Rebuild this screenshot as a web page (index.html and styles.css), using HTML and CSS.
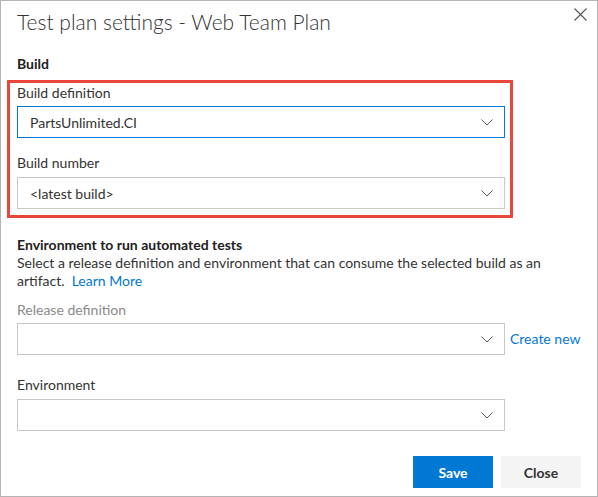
FILE: index.html
```html
<!DOCTYPE html>
<html>
<head>
<meta charset="utf-8">
<link rel="stylesheet" href="styles.css">
</head>
<body>
<div class="dialog">
  <div class="title-row">
    <h1 class="title">Test plan settings - Web Team Plan</h1>
    <button class="close-x" aria-label="Close">
      <svg width="13" height="13" viewBox="0 0 13 13"><path d="M0.5 0.5 L12.5 12.5 M12.5 0.5 L0.5 12.5" stroke="#555" stroke-width="1.1" fill="none"/></svg>
    </button>
  </div>

  <div class="section-title build-title">Build</div>

  <div class="highlight">
    <div class="label first">Build definition</div>
    <div class="select focused">
      <span class="value">PartsUnlimited.CI</span>
      <svg class="chev" width="12" height="7" viewBox="0 0 12 7"><polyline points="0.5,0.5 6,6 11.5,0.5" fill="none" stroke="#5a5a5a" stroke-width="1"/></svg>
    </div>
    <div class="label">Build number</div>
    <div class="select">
      <span class="value">&lt;latest build&gt;</span>
      <svg class="chev" width="12" height="7" viewBox="0 0 12 7"><polyline points="0.5,0.5 6,6 11.5,0.5" fill="none" stroke="#5a5a5a" stroke-width="1"/></svg>
    </div>
  </div>

  <div class="env">
    <div class="section-title">Environment to run automated tests</div>
    <p class="desc">Select a release definition and environment that can consume the selected build as an<br>artifact.&nbsp; <a class="link" href="#">Learn More</a></p>
  </div>

  <div class="label muted">Release definition</div>
  <div class="row">
    <div class="select">
      <span class="value"></span>
      <svg class="chev" width="12" height="7" viewBox="0 0 12 7"><polyline points="0.5,0.5 6,6 11.5,0.5" fill="none" stroke="#5a5a5a" stroke-width="1"/></svg>
    </div>
    <a class="link create" href="#">Create new</a>
  </div>

  <div class="label env-label">Environment</div>
  <div class="select">
    <span class="value"></span>
    <svg class="chev" width="12" height="7" viewBox="0 0 12 7"><polyline points="0.5,0.5 6,6 11.5,0.5" fill="none" stroke="#5a5a5a" stroke-width="1"/></svg>
  </div>

  <div class="footer">
    <button class="btn primary">Save</button>
    <button class="btn">Close</button>
  </div>
</div>
</body>
</html>
```
FILE: styles.css
```css
html, body {
  margin: 0;
  padding: 0;
  background: #fff;
}
.dialog {
  box-sizing: border-box;
  width: 598px;
  height: 497px;
  border: 1px solid #b4b4b4;
  padding: 0 16px 0 16px;
  font-family: "Lato", "Open Sans", sans-serif;
  font-size: 14px;
  color: #333;
  display: flex;
  flex-direction: column;
}
.title-row {
  display: flex;
  justify-content: space-between;
  align-items: flex-start;
  height: 53px;
}
.title {
  margin: 7px 0 0 0;
  font-size: 21px;
  font-weight: 300;
  line-height: 28px;
  color: #333;
}
.close-x {
  border: 0;
  background: none;
  padding: 0;
  margin: 7px -6px 0 0;
  width: 13px;
  height: 13px;
  display: flex;
}
.section-title {
  font-weight: 700;
  line-height: 18px;
  color: #212121;
}
.build-title {
  line-height: 20px;
  height: 20px;
}
.highlight {
  align-self: flex-start;
  margin: 6px 0 0 -10px;
  padding: 0 5px 6px 7px;
  border: 3px solid #e8473a;
}
.label {
  line-height: 20px;
  margin-top: 15px;
  margin-bottom: 4px;
}
.label.first {
  margin-top: 0;
  margin-bottom: 3px;
}
.select {
  box-sizing: border-box;
  width: 488px;
  height: 32px;
  border: 1px solid #c8c8c8;
  display: flex;
  align-items: center;
  justify-content: space-between;
  padding: 0 11px 0 12px;
  flex-shrink: 0;
}
.select.focused {
  border-color: #0078d4;
}
.value {
  color: #333;
}
.chev {
  display: block;
}
.env {
  margin-top: 18px;
}
.desc {
  margin: 0;
  line-height: 18px;
}
.link {
  color: #0078d4;
  text-decoration: none;
}
.label.muted {
  color: #8a8a8a;
  margin-top: 10px;
  margin-bottom: 3px;
}
.row {
  display: flex;
  align-items: center;
  gap: 5px;
}
.create {
  line-height: 20px;
}
.label.env-label {
  margin-top: 20px;
}
.footer {
  display: flex;
  justify-content: flex-end;
  gap: 8px;
  margin-top: 25px;
}
.btn {
  width: 80px;
  height: 32px;
  border: 0;
  background: #f4f4f4;
  color: #333;
  font-family: inherit;
  font-size: 14px;
  font-weight: 700;
  padding: 0;
}
.btn.primary {
  background: #0078d4;
  color: #fff;
}
```
